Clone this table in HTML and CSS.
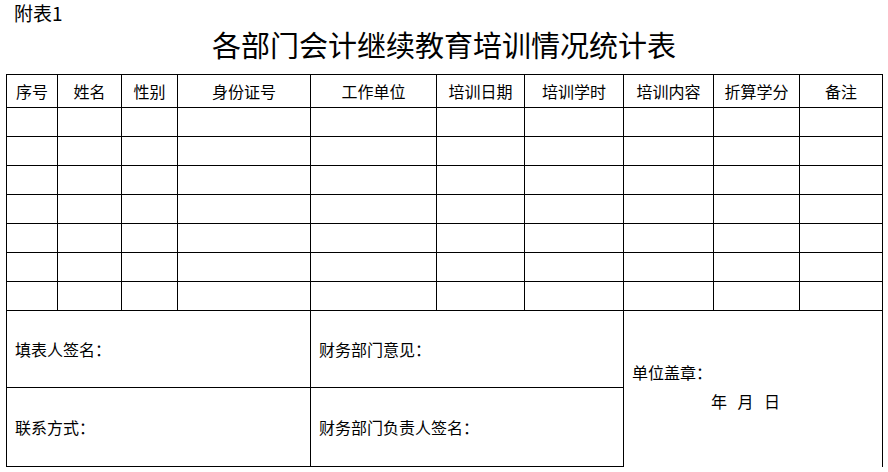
FILE: index.html
```html
<!DOCTYPE html>
<html lang="zh-CN">
<head>
<meta charset="utf-8">
<title>各部门会计继续教育培训情况统计表</title>
<link rel="stylesheet" href="styles.css">
</head>
<body>
<div class="annex">附表1</div>
<h1 class="title">各部门会计继续教育培训情况统计表</h1>
<table class="sheet">
  <colgroup>
    <col class="c1"><col class="c2"><col class="c3"><col class="c4"><col class="c5">
    <col class="c6"><col class="c7"><col class="c8"><col class="c9"><col class="c10">
  </colgroup>
  <thead>
    <tr class="head">
      <th>序号</th><th>姓名</th><th>性别</th><th>身份证号</th><th>工作单位</th>
      <th>培训日期</th><th>培训学时</th><th>培训内容</th><th>折算学分</th><th>备注</th>
    </tr>
  </thead>
  <tbody>
    <tr class="row"><td></td><td></td><td></td><td></td><td></td><td></td><td></td><td></td><td></td><td></td></tr>
    <tr class="row"><td></td><td></td><td></td><td></td><td></td><td></td><td></td><td></td><td></td><td></td></tr>
    <tr class="row"><td></td><td></td><td></td><td></td><td></td><td></td><td></td><td></td><td></td><td></td></tr>
    <tr class="row"><td></td><td></td><td></td><td></td><td></td><td></td><td></td><td></td><td></td><td></td></tr>
    <tr class="row"><td></td><td></td><td></td><td></td><td></td><td></td><td></td><td></td><td></td><td></td></tr>
    <tr class="row"><td></td><td></td><td></td><td></td><td></td><td></td><td></td><td></td><td></td><td></td></tr>
    <tr class="row"><td></td><td></td><td></td><td></td><td></td><td></td><td></td><td></td><td></td><td></td></tr>
    <tr class="sign1">
      <td colspan="4" class="label">填表人签名<span class="colon">：</span></td>
      <td colspan="3" class="label">财务部门意见<span class="colon">：</span></td>
      <td colspan="3" rowspan="2" class="seal">
        <div class="seal-label">单位盖章<span class="colon">：</span></div>
        <div class="date"><span>年</span><span>月</span><span>日</span></div>
      </td>
    </tr>
    <tr class="sign2">
      <td colspan="4" class="label">联系方式<span class="colon">：</span></td>
      <td colspan="3" class="label">财务部门负责人签名<span class="colon">：</span></td>
    </tr>
  </tbody>
</table>
</body>
</html>
```

FILE: styles.css
```css
html, body {
  margin: 0;
  padding: 0;
  background: #fff;
}
body {
  font-family: "Noto Sans CJK SC", "Noto Sans", sans-serif;
  color: #000;
}
.annex {
  padding-left: 14px;
  font-size: 19px;
  line-height: 26px;
}
.title {
  margin: 0 0 11px 0;
  font-size: 29px;
  font-weight: normal;
  line-height: 37px;
  text-align: center;
}
.sheet {
  margin-left: 6px;
  border-collapse: collapse;
  table-layout: fixed;
  width: 877px;
  font-size: 16px;
}
.sheet th, .sheet td {
  border: 1px solid #000;
  padding: 0;
}
.sheet th {
  font-weight: normal;
  text-align: center;
  vertical-align: middle;
}
.c1 { width: 51px; }
.c2 { width: 64px; }
.c3 { width: 56px; }
.c4 { width: 133px; }
.c5 { width: 126px; }
.c6 { width: 88px; }
.c7 { width: 99px; }
.c8 { width: 90px; }
.c9 { width: 86px; }
.c10 { width: 83px; }
.head { height: 33px; }
.row { height: 29px; }
.sign1 { height: 77px; }
.sign2 { height: 79px; }
.sheet td.label {
  padding-left: 8px;
  vertical-align: middle;
}
.colon {
  font-family: "Noto Sans CJK TC", "Noto Sans CJK SC", sans-serif;
}
.sheet td.seal {
  border-bottom: none;
  padding: 0 0 4px 8px;
  vertical-align: middle;
}
.seal-label {
  line-height: 29px;
}
.date {
  display: flex;
  gap: 10.5px;
  padding-left: 79px;
  line-height: 29px;
}
```
